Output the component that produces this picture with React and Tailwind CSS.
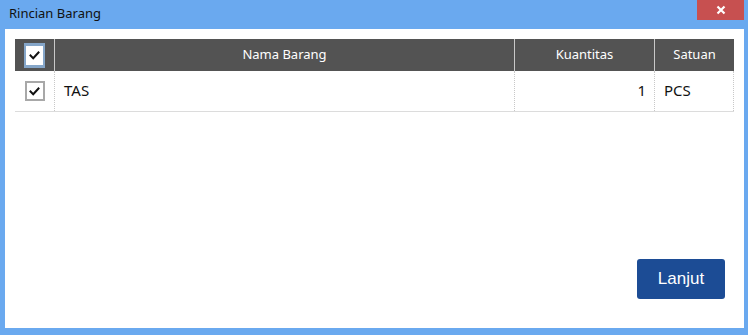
import React from "react";

function Check() {
  return (
    <svg width="11" height="9" viewBox="0 0 11 9" fill="none">
      <path d="M1.5 4.5 L4.2 7.2 L9.5 1.5" stroke="#111" strokeWidth="2" strokeLinecap="square" />
    </svg>
  );
}

export default function App() {
  const font = { fontFamily: '"Noto Sans", "Open Sans", sans-serif' };
  return (
    <div className="w-[748px] h-[335px] bg-[#6aa9ef] flex flex-col overflow-hidden" style={font}>
      <div className="h-[29px] flex items-start justify-between shrink-0">
        <div className="pl-[9px] pt-[4px] text-[13px] text-[#111] leading-[18px]">Rincian Barang</div>
        <div className="w-[47px] h-[20px] mr-[4px] bg-[#c75050] flex items-center justify-center">
          <svg width="10" height="10" viewBox="0 0 10 10">
            <path d="M1.5 1.5 L8.5 8.5 M8.5 1.5 L1.5 8.5" stroke="#fff" strokeWidth="2.2" />
          </svg>
        </div>
      </div>
      <div className="ml-[5px] mr-[4px] mb-[7px] flex-1 bg-white flex flex-col px-[10px] pt-[10px]">
        <div className="flex flex-col">
          <div className="flex h-[32px] bg-[#535353] text-white text-[13px]">
            <div className="w-[40px] flex items-center justify-center border-r border-[#c8c8c8]">
              <div className="w-[21px] h-[25px] bg-[#85a6c9] flex items-center justify-center">
                <div className="w-[17px] h-[19px] bg-white flex items-center justify-center">
                  <Check />
                </div>
              </div>
            </div>
            <div className="w-[460px] flex items-center justify-center border-r border-[#c8c8c8]">Nama Barang</div>
            <div className="w-[140px] flex items-center justify-center border-r border-[#c8c8c8]">Kuantitas</div>
            <div className="flex-1 flex items-center justify-center">Satuan</div>
          </div>
          <div className="flex h-[41px] text-[15px] text-[#111] border-b border-[#dcdcdc]">
            <div className="w-[40px] flex items-center justify-center border-r border-dotted border-[#c8c8c8]">
              <div className="w-[20px] h-[20px] border-2 border-[#a8a8a8] bg-white flex items-center justify-center">
                <Check />
              </div>
            </div>
            <div className="w-[460px] flex items-center pl-[9px] pb-[2px] border-r border-dotted border-[#c8c8c8]">TAS</div>
            <div className="w-[140px] flex items-center justify-end pr-[8px] pb-[2px] border-r border-dotted border-[#c8c8c8]">1</div>
            <div className="flex-1 flex items-center pl-[9px] pb-[2px] border-r border-dotted border-[#c8c8c8]">PCS</div>
          </div>
        </div>
        <div className="flex-1" />
        <div className="flex justify-end pr-[9px] pb-[29px]">
          <button
            className="w-[88px] h-[40px] bg-[#1c4c95] rounded-[3px] text-white text-[17px] flex items-center justify-center"
            style={{ fontFamily: '"Liberation Sans", Arial, sans-serif' }}
          >
            Lanjut
          </button>
        </div>
      </div>
    </div>
  );
}
